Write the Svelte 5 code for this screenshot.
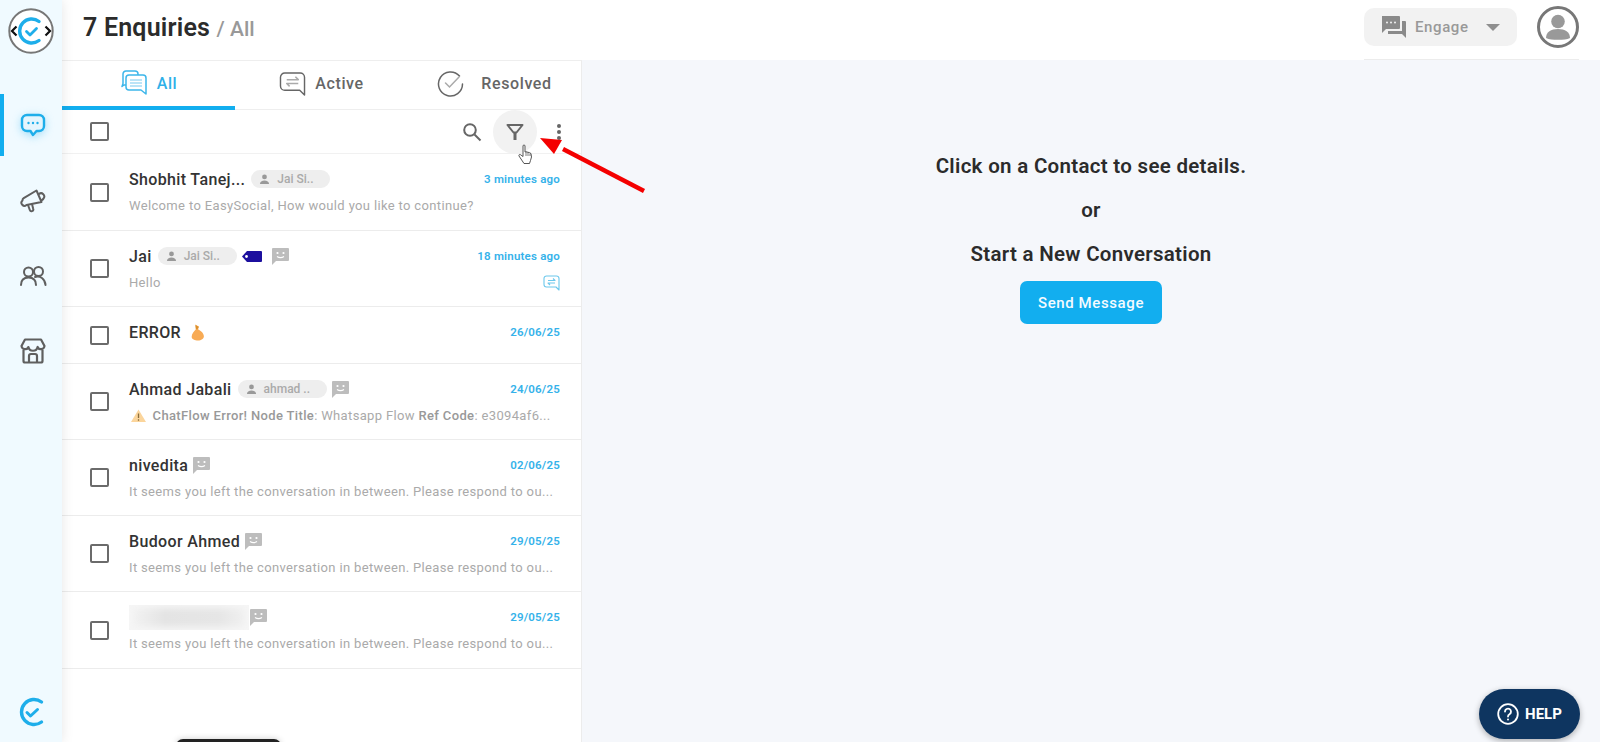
<script>
  const leftMsg = "It seems you left the conversation in between. Please respond to ou...";
  const rows = [
    { name: "Shobhit Tanej...", pill: "Jai Si..", date: "3 minutes ago", preview: "Welcome to EasySocial, How would you like to continue?" },
    { name: "Jai", pill: "Jai Si..", tag: true, smile: true, date: "18 minutes ago", preview: "Hello", swap: true },
    { name: "ERROR", emoji: true, date: "26/06/25", short: true },
    { name: "Ahmad Jabali", pill: "ahmad ..", wide: true, smile: true, date: "24/06/25", error: true },
    { name: "nivedita", smile: true, date: "02/06/25", preview: leftMsg },
    { name: "Budoor Ahmed", smile: true, date: "29/05/25", preview: leftMsg },
    { name: "", hidden: true, smile: true, date: "29/05/25", preview: leftMsg }
  ];
</script>

<div class="app">
  <aside class="side">
    <svg class="logo" viewBox="0 0 46 46" width="46" height="46">
      <circle cx="23" cy="23" r="21.7" fill="#fff" stroke="#777" stroke-width="2" />
      <path d="M31 13.500a12 12 0 1 0 0 19" fill="none" stroke="#1eaeea" stroke-width="3.400" stroke-linecap="round" />
      <path d="M18.500 23.500l3.500 3.500 6.500-6.500" fill="none" stroke="#1eaeea" stroke-width="2.800" stroke-linecap="round" stroke-linejoin="round" />
      <path d="M8.500 18.500L4 23l4.500 4.500M37.500 18.500L42 23l-4.500 4.500" fill="none" stroke="#111" stroke-width="2.200" />
    </svg>
    <nav class="side-nav">
      <div class="side-item active">
        <svg viewBox="0 0 26 26" width="26" height="26">
          <path d="M7 3h12a5 5 0 0 1 5 5v6a5 5 0 0 1-5 5h-2.500l-3.500 4-2.500-4H7a5 5 0 0 1-5-5V8a5 5 0 0 1 5-5z" fill="#e4f5fd" stroke="#1eaeea" stroke-width="2.400" stroke-linejoin="round" />
          <circle cx="8.500" cy="11" r="1.200" fill="#1eaeea" /><circle cx="13" cy="11" r="1.200" fill="#1eaeea" /><circle cx="17.500" cy="11" r="1.200" fill="#1eaeea" />
        </svg>
      </div>
      <div class="side-item">
        <svg viewBox="0 0 26 26" width="26" height="26" fill="none" stroke="#5f5f5f" stroke-width="2" stroke-linejoin="round" stroke-linecap="round">
          <path d="M2.500 13.500a2.500 2.500 0 0 1 1.200-2.400L16.500 3.500l5 11.500-15 3a3 3 0 0 1-4-4.500z" />
          <path d="M19 7a3.200 3.200 0 0 1 4.500 4.500 3 3 0 0 1-1.500 1.500M8 18l1.800 5a1.800 1.800 0 0 0 3.400-1.200L12 17" />
        </svg>
      </div>
      <div class="side-item">
        <svg viewBox="0 0 28 26" width="28" height="26" fill="none" stroke="#5f5f5f" stroke-width="2" stroke-linecap="round">
          <circle cx="9.500" cy="9" r="4.500" /><circle cx="19.500" cy="8.500" r="4.500" />
          <path d="M2 22c0-5 3-7.500 7.500-7.500S17 17 17 22M16 14c5-1.500 10 1.500 10.500 8" />
        </svg>
      </div>
      <div class="side-item">
        <svg viewBox="0 0 28 28" width="28" height="28" fill="none" stroke="#5f5f5f" stroke-width="2.200" stroke-linejoin="round">
          <path d="M6 2.500h16l3.500 6.500a3.600 3.600 0 0 1-6.900 1 4.700 4.700 0 0 1-9.200 0 3.600 3.600 0 0 1-6.900-1z" />
          <path d="M4.500 13v11a1.500 1.500 0 0 0 1.500 1.500h16a1.500 1.500 0 0 0 1.500-1.500V13M10 25v-6a2 2 0 0 1 2-2h4a2 2 0 0 1 2 2v6" />
        </svg>
      </div>
    </nav>
    <svg class="side-logo" viewBox="0 0 28 32" width="28" height="32">
      <path d="M24.500 6a12.500 12.500 0 1 0 0 20" fill="none" stroke="#1eaeea" stroke-width="3.400" stroke-linecap="round" />
      <path d="M10 16.500l3.500 3.500 7-6.500" fill="none" stroke="#1eaeea" stroke-width="3" stroke-linecap="round" stroke-linejoin="round" />
    </svg>
  </aside>

  <div class="main">
    <header class="header">
      <h1>7 Enquiries <span>/ All</span></h1>
      <div class="actions">
        <div class="engage">
          <svg viewBox="0 0 26 24" width="26" height="24" fill="#8a8a8a">
            <path d="M1 1h17a1 1 0 0 1 1 1v11a1 1 0 0 1-1 1H5l-4 4z" />
            <path d="M21 6h3a1 1 0 0 1 1 1v16l-4-4H7v-3h14z" />
            <circle cx="6" cy="7.500" r="1" fill="#f2f2f2" /><circle cx="10" cy="7.500" r="1" fill="#f2f2f2" /><circle cx="14" cy="7.500" r="1" fill="#f2f2f2" />
          </svg>
          <span>Engage</span>
          <i class="caret"></i>
        </div>
        <svg class="avatar" viewBox="0 0 42 42" width="42" height="42">
          <circle cx="21" cy="21" r="19.500" fill="#fff" stroke="#777" stroke-width="3" />
          <circle cx="21" cy="15.500" r="6.800" fill="#999" />
          <path d="M9 32c0-6 5-9 12-9s12 3 12 9c-3 1.500-7 1.700-12 1.700S12 33.500 9 32z" fill="#999" />
        </svg>
      </div>
    </header>

    <div class="content">
      <section class="list">
        <div class="tabs">
          <div class="tab on">
            <svg viewBox="0 0 28 26" width="28" height="26" fill="none" stroke="#3db6ea" stroke-width="1.500" stroke-linejoin="round">
              <path d="M6 15H4l-2 1.500 1-3V4a3 3 0 0 1 3-3h9a3 3 0 0 1 3 3v1" />
              <path d="M9 5h14a3 3 0 0 1 3 3v16l-5-4H9a3 3 0 0 1-3-3V8a3 3 0 0 1 3-3z" fill="#fff" />
              <path d="M10 10h12M10 13h12M10 16h12" stroke="#a5dcf5" />
            </svg>
            <span>All</span>
          </div>
          <div class="tab">
            <svg viewBox="0 0 28 26" width="27" height="25" fill="none" stroke="#666" stroke-width="1.500" stroke-linejoin="round">
              <path d="M6 2h16a4.500 4.500 0 0 1 4.500 4.500V25L21.500 20H6a4.500 4.500 0 0 1-4.500-4.500v-9A4.500 4.500 0 0 1 6 2z" />
              <path d="M8 9h12l-3-3M20 13H8l3 3" stroke="#aaa" stroke-width="1.600" />
            </svg>
            <span>Active</span>
          </div>
          <div class="tab res">
            <svg viewBox="0 0 27 27" width="27" height="27" fill="none" stroke="#666" stroke-width="1.500" stroke-linecap="round">
              <path d="M22.500 6A12 12 0 1 0 25.500 14" />
              <path d="M8.500 13l4 4 9.500-10" stroke="#aaa" />
            </svg>
            <span>Resolved</span>
          </div>
        </div>

        <div class="toolbar">
          <span class="check"></span>
          <div class="tools">
            <svg viewBox="0 0 20 20" width="20" height="20" fill="none" stroke="#666" stroke-width="2">
              <circle cx="8" cy="8" r="5.800" /><path d="M12.500 12.500l6 6" />
            </svg>
            <div class="filter">
              <svg viewBox="0 0 18 18" width="18" height="18" fill="none" stroke="#666" stroke-width="2" stroke-linejoin="round">
                <path d="M1.500 2h15L10.500 9.500h-3z" />
                <path d="M7.500 9h3v8h-3z" fill="#666" stroke="none" />
              </svg>
            </div>
            <div class="dots"><i></i><i></i><i></i></div>
          </div>
        </div>

        <div class="rows">
          {#each rows as row}
            <div class="row" class:short={row.short}>
              <span class="check"></span>
              <div class="body">
                <div class="top">
                  {#if row.hidden}
                    <div class="blurred"></div>
                  {:else}
                    <span class="name">{row.name}</span>
                  {/if}
                  {#if row.emoji}
                    <svg class="emoji" viewBox="0 0 14 16" width="15" height="17">
                      <path d="M5 0.500l3.500 2-1 2.500c3 1.500 5.500 4 5.500 6.500 0 2.500-2.500 4-5.500 4S1.500 14.500 1.500 12C1.500 9 4 7 5.500 5z" fill="#f8ab55" />
                      <path d="M5 1l3 1.500-1 2.500-1.500 0z" fill="#d9902f" />
                    </svg>
                  {/if}
                  {#if row.pill}
                    <span class="pill" class:wide={row.wide}>
                      <svg viewBox="0 0 12 12" width="11" height="11" fill="#999">
                        <circle cx="6" cy="3.200" r="2.600" /><path d="M1 11c0-2.700 2.300-4 5-4s5 1.300 5 4z" />
                      </svg>
                      <b>{row.pill}</b>
                    </span>
                  {/if}
                  {#if row.tag}
                    <svg class="tag" viewBox="0 0 20 11" width="20" height="11">
                      <path d="M5 0h14a1 1 0 0 1 1 1v9a1 1 0 0 1-1 1H5L0 5.500z" fill="#1c0f9e" />
                      <circle cx="4.500" cy="5.500" r="1.400" fill="#fff" />
                    </svg>
                  {/if}
                  {#if row.smile}
                    <svg class="smile" viewBox="0 0 17 17" width="17" height="17">
                      <path d="M1 0h15a1 1 0 0 1 1 1v11a1 1 0 0 1-1 1H4l-4 4V1a1 1 0 0 1 1-1z" fill="#bdbdbd" />
                      <circle cx="5.500" cy="5" r="1.100" fill="#fff" /><circle cx="11.500" cy="5" r="1.100" fill="#fff" />
                      <path d="M5 8.500c2 1.300 5 1.300 7 0" fill="none" stroke="#fff" stroke-width="1.100" />
                    </svg>
                  {/if}
                  <span class="date">{row.date}</span>
                </div>
                {#if row.error}
                  <div class="preview-line">
                    <div class="preview">
                      <svg class="warn" viewBox="0 0 15 13" width="15" height="13">
                        <path d="M7.500 0.500L15 13H0z" fill="#fbd59c" />
                        <path d="M7.500 4.500v4.500M7.500 10.200v1.500" stroke="#8a6d3b" stroke-width="1.300" />
                      </svg>
                      <b>ChatFlow Error! Node Title</b>: Whatsapp Flow <b>Ref Code</b>: e3094af6...
                    </div>
                  </div>
                {:else if row.preview}
                  <div class="preview-line">
                    <div class="preview">{row.preview}</div>
                    {#if row.swap}
                      <svg class="swap" viewBox="0 0 17 16" width="17" height="16" fill="none" stroke="#6cc8ec" stroke-width="1.100" stroke-linejoin="round">
                        <path d="M3.500 1h10a2.500 2.500 0 0 1 2.500 2.500V15l-3-3H3.500A2.500 2.500 0 0 1 1 9.500v-6A2.500 2.500 0 0 1 3.500 1z" />
                        <path d="M5 5.500h7l-2-2M12 8H5l2 2" />
                      </svg>
                    {/if}
                  </div>
                {/if}
              </div>
            </div>
          {/each}
        </div>
      </section>

      <section class="detail">
        <p>Click on a Contact to see details.</p>
        <p>or</p>
        <p>Start a New Conversation</p>
        <button class="send">Send Message</button>
      </section>
    </div>
  </div>

  <!-- annotation drawn on top of the screenshot -->
  <svg class="arrow" viewBox="0 0 120 70" width="120" height="70">
    <path d="M105 54L24 12" stroke="#f40000" stroke-width="4.500" />
    <path d="M1 1L23 3 15 17z" fill="#f40000" />
  </svg>
  <svg class="hand" viewBox="0 0 16 20" width="16" height="20">
    <path d="M5 2a1 1 0 0 1 2 0v6l1-.3 1 .3 1 .3 1.500.3 1.500 1 .5 3.400-1 3.500-1 3H6l-3-4.500-2-3c-.5-1 .5-2 1.500-1.300L5 12.500z" fill="#fff" stroke="#444" stroke-width=".9" stroke-linejoin="round" />
    <path d="M8 8v4M10 8.500V12M12 9.500V12" stroke="#444" stroke-width=".7" />
  </svg>

  <button class="help">
    <svg viewBox="0 0 22 22" width="22" height="22" fill="none" stroke="#fff" stroke-width="1.800">
      <circle cx="11" cy="11" r="9.800" />
      <path d="M8 8.500a3 3 0 1 1 4.500 2.700c-1 .6-1.500 1.200-1.500 2.300" stroke-linecap="round" />
      <circle cx="11" cy="16.500" r="1" fill="#fff" stroke="none" />
    </svg>
    HELP
  </button>
  <div class="peek"></div>
</div>

<style>
  :global(body) {
    font-family: Roboto, "Liberation Sans", sans-serif;
    background: #fff;
  }
  .app {
    position: relative;
    display: flex;
    width: 1600px;
    height: 742px;
    overflow: hidden;
  }

  .side {
    position: relative;
    z-index: 2;
    flex: 0 0 62px;
    display: flex;
    flex-direction: column;
    align-items: center;
    background: #f0faff;
    box-shadow: 0 0 12px rgba(0, 0, 0, 0.1);
  }
  .logo {
    margin-top: 8px;
  }
  .side-nav {
    margin-top: 40px;
    align-self: stretch;
    display: flex;
    flex-direction: column;
    gap: 14px;
  }
  .side-item {
    height: 62px;
    display: flex;
    align-items: center;
    justify-content: center;
    border-left: 4px solid transparent;
  }
  .side-item:nth-child(2) {
    margin-top: -1px;
  }
  .side-item:nth-child(4) {
    margin-top: -1px;
  }
  .side-item.active {
    border-left-color: #12aeef;
  }
  .side-item.active svg {
    filter: drop-shadow(0 2px 4px rgba(30, 174, 234, 0.35));
  }
  .side-logo {
    margin-top: auto;
    margin-bottom: 14px;
  }

  .main {
    flex: 1;
    display: flex;
    flex-direction: column;
    min-width: 0;
  }
  .header {
    height: 60px;
    display: flex;
    justify-content: space-between;
    align-items: stretch;
    padding: 0 21px;
    box-sizing: border-box;
  }
  h1 {
    margin: 0;
    padding-top: 12px;
    font-size: 25px;
    line-height: 31px;
    font-weight: 600;
    letter-spacing: 0.2px;
    color: #2b2b2b;
  }
  h1 span {
    font-size: 21px;
    font-weight: 500;
    letter-spacing: 0;
    color: #999;
  }
  .actions {
    display: flex;
    align-items: flex-start;
    gap: 20px;
    width: 215px;
    height: 60px;
    box-sizing: border-box;
    border-bottom: 1px solid #ececec;
    padding-top: 6px;
  }
  .engage {
    margin-top: 2px;
    width: 153px;
    height: 38px;
    box-sizing: border-box;
    padding: 0 17px;
    display: flex;
    align-items: center;
    background: #f2f2f2;
    border-radius: 10px;
    color: #999;
    font-size: 15px;
    font-weight: 500;
    letter-spacing: 0.6px;
  }
  .engage span {
    margin-left: 8px;
  }
  .caret {
    margin-left: auto;
    border: 7px solid transparent;
    border-top: 7px solid #8f8f8f;
    border-bottom: 0;
  }
  .avatar {
    flex: none;
  }

  .content {
    flex: 1;
    display: flex;
    min-height: 0;
  }
  .list {
    flex: 0 0 520px;
    min-width: 0;
    box-sizing: border-box;
    background: #fff;
    border-top: 1px solid #eee;
    border-right: 1px solid #ececec;
  }
  .tabs {
    display: grid;
    grid-template-columns: repeat(3, 1fr);
    height: 49px;
    border-bottom: 1px solid #eee;
    box-sizing: border-box;
  }
  .tab {
    display: flex;
    align-items: center;
    justify-content: center;
    gap: 9px;
    height: 49px;
    box-sizing: border-box;
    padding-bottom: 5px;
    color: #666;
    font-size: 16px;
    font-weight: 500;
    letter-spacing: 0.6px;
  }
  .tab.on {
    color: #2fb0e8;
    border-bottom: 4px solid #12aeef;
    padding-bottom: 1px;
  }
  .tab.res {
    gap: 17px;
  }
  .toolbar {
    height: 44px;
    box-sizing: border-box;
    padding: 0 21px 0 28px;
    display: flex;
    align-items: center;
    justify-content: space-between;
    border-bottom: 1px solid #f1f1f1;
  }
  .tools {
    display: flex;
    align-items: center;
  }
  .filter {
    width: 44px;
    height: 44px;
    margin-left: 11px;
    border-radius: 50%;
    background: #f2f2f2;
    display: flex;
    align-items: center;
    justify-content: center;
  }
  .dots {
    margin-left: 20px;
    margin-right: -1px;
    display: flex;
    flex-direction: column;
    gap: 2px;
  }
  .dots i {
    width: 4px;
    height: 4px;
    border-radius: 50%;
    background: #666;
  }
  .check {
    flex: none;
    width: 19px;
    height: 19px;
    box-sizing: border-box;
    border: 2px solid #6b6b6b;
    border-radius: 2px;
    background: #fff;
  }

  .row {
    display: flex;
    align-items: center;
    gap: 20px;
    padding: 0 21px 0 28px;
    border-bottom: 1px solid #ececec;
  }
  .body {
    flex: 1;
    min-width: 0;
    padding: 12px 0 13px;
  }
  .row:first-child .body,
  .row:last-child .body {
    padding-bottom: 14px;
  }
  .row.short .body {
    padding-bottom: 18px;
  }
  .top {
    display: flex;
    align-items: center;
    height: 26px;
    gap: 5px;
  }
  .name {
    font-size: 16px;
    font-weight: 500;
    color: #333;
    letter-spacing: 0.35px;
    white-space: nowrap;
  }
  .blurred {
    width: 120px;
    height: 25px;
    margin-right: -4px;
    box-shadow: inset 0 0 7px 3px #f6f6f6;
    background: linear-gradient(90deg, #f4f4f4, #e4e4e4 30%, #e6e6e6 75%, #f2f2f2);
  }
  .emoji {
    margin-left: 4px;
  }
  .pill {
    display: flex;
    align-items: center;
    gap: 7px;
    width: 79px;
    height: 18px;
    box-sizing: border-box;
    padding-left: 8px;
    margin-left: 1px;
    border-radius: 9px;
    background: #eeeeee;
    color: #aaa;
    font-size: 12px;
    white-space: nowrap;
  }
  .pill.wide {
    width: 89px;
  }
  .pill b {
    font-weight: 500;
  }
  .tag {
    margin-right: 5px;
  }
  .date {
    margin-left: auto;
    font-size: 11.5px;
    font-weight: 600;
    letter-spacing: 0.2px;
    color: #35b2ea;
  }
  .preview-line {
    display: flex;
    align-items: center;
    justify-content: space-between;
    margin-top: 4px;
    height: 20px;
  }
  .preview {
    font-size: 13px;
    line-height: 20px;
    letter-spacing: 0.35px;
    color: #aaa;
    white-space: nowrap;
  }
  .preview b {
    font-weight: 500;
    color: #999;
  }
  .warn {
    vertical-align: -2px;
    margin: 0 3px 0 2px;
  }

  .detail {
    flex: 1;
    background: #f5f7fb;
    display: flex;
    flex-direction: column;
    align-items: center;
    padding-top: 95px;
    color: #2b2b2b;
  }
  .detail p {
    margin: 0 0 21px;
    font-size: 20.5px;
    line-height: 23px;
    font-weight: 600;
    letter-spacing: 0.3px;
  }
  .detail p:nth-child(3) {
    margin-bottom: 15px;
  }
  .send {
    width: 142px;
    height: 43px;
    border: 0;
    border-radius: 7px;
    background: #12aeef;
    color: #f4fbff;
    font-family: inherit;
    font-size: 15px;
    font-weight: 500;
    letter-spacing: 0.6px;
  }

  .arrow {
    position: absolute;
    left: 539px;
    top: 137px;
  }
  .hand {
    position: absolute;
    left: 518px;
    top: 144px;
  }
  .help {
    position: absolute;
    left: 1479px;
    top: 689px;
    width: 101px;
    height: 50px;
    border: 0;
    border-radius: 25px;
    background: #0e3560;
    box-shadow: 0 2px 6px rgba(0, 0, 0, 0.3);
    color: #fff;
    font-family: inherit;
    font-size: 15px;
    font-weight: 700;
    display: flex;
    align-items: center;
    justify-content: center;
    gap: 6px;
  }
  .peek {
    position: absolute;
    left: 176px;
    top: 739px;
    width: 105px;
    height: 8px;
    border-radius: 7px 7px 0 0;
    background: #222;
    box-shadow: 0 0 6px rgba(0, 0, 0, 0.2);
  }
</style>
